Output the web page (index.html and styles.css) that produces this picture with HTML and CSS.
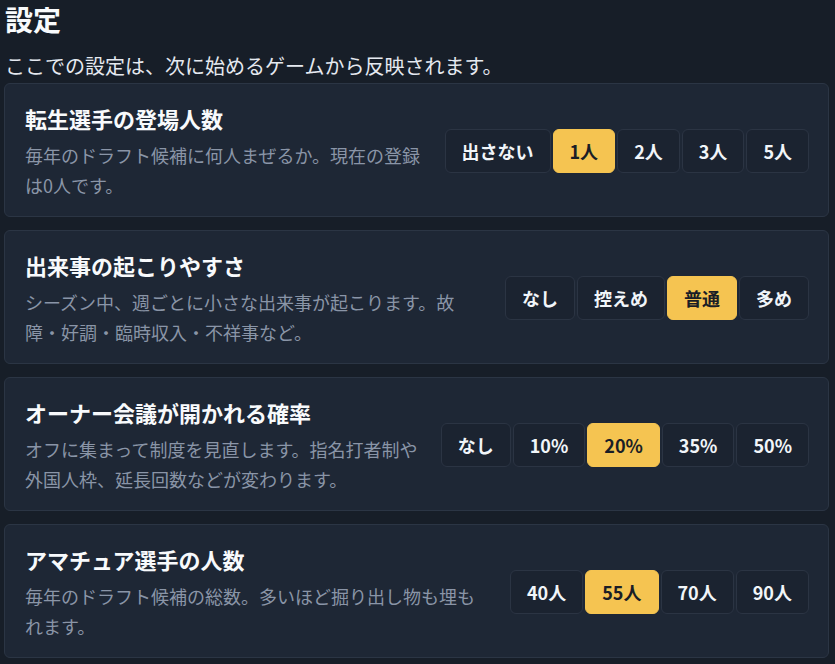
FILE: index.html
```html
<!DOCTYPE html>
<html lang="ja">
<head>
<meta charset="utf-8">
<title>設定</title>
<link rel="stylesheet" href="styles.css">
</head>
<body>
<main class="page">
  <h1 class="page-title">設定</h1>
  <p class="page-sub">ここでの設定は、次に始めるゲームから反映されます。</p>

  <section class="card">
    <div class="card-text">
      <h2 class="card-title">転生選手の登場人数</h2>
      <p class="card-desc">毎年のドラフト候補に何人まぜるか。現在の登録は0人です。</p>
    </div>
    <div class="seg">
      <button class="seg-btn">出さない</button>
      <button class="seg-btn is-active">1人</button>
      <button class="seg-btn">2人</button>
      <button class="seg-btn">3人</button>
      <button class="seg-btn">5人</button>
    </div>
  </section>

  <section class="card">
    <div class="card-text">
      <h2 class="card-title">出来事の起こりやすさ</h2>
      <p class="card-desc">シーズン中、週ごとに小さな出来事が起こります。故障・好調・臨時収入・不祥事など。</p>
    </div>
    <div class="seg">
      <button class="seg-btn">なし</button>
      <button class="seg-btn">控えめ</button>
      <button class="seg-btn is-active">普通</button>
      <button class="seg-btn">多め</button>
    </div>
  </section>

  <section class="card">
    <div class="card-text">
      <h2 class="card-title">オーナー会議が開かれる確率</h2>
      <p class="card-desc">オフに集まって制度を見直します。指名打者制や外国人枠、延長回数などが変わります。</p>
    </div>
    <div class="seg">
      <button class="seg-btn">なし</button>
      <button class="seg-btn">10%</button>
      <button class="seg-btn is-active">20%</button>
      <button class="seg-btn">35%</button>
      <button class="seg-btn">50%</button>
    </div>
  </section>

  <section class="card">
    <div class="card-text">
      <h2 class="card-title">アマチュア選手の人数</h2>
      <p class="card-desc">毎年のドラフト候補の総数。多いほど掘り出し物も埋もれます。</p>
    </div>
    <div class="seg">
      <button class="seg-btn">40人</button>
      <button class="seg-btn is-active">55人</button>
      <button class="seg-btn">70人</button>
      <button class="seg-btn">90人</button>
    </div>
  </section>
</main>
</body>
</html>
```

FILE: styles.css
```css
html, body {
  margin: 0;
  padding: 0;
  background: #171e28;
}

body {
  font-family: "Noto Sans CJK JP", "Noto Sans", sans-serif;
  color: #f1f5f9;
}

.page {
  width: 825px;
  padding: 2px 0 0 4px;
  display: flex;
  flex-direction: column;
}

.page-title {
  margin: 0 0 0 1px;
  font-size: 28px;
  line-height: 34px;
  font-weight: 700;
  color: #f8fafc;
}

.page-sub {
  margin: 15px 0 2px 1px;
  font-size: 20px;
  line-height: 30px;
  color: #e5e9f0;
}

.card {
  display: flex;
  align-items: center;
  gap: 20px;
  margin-bottom: 13px;
  padding: 18px 19px 16px 20px;
  background: #1e2735;
  border: 1px solid #2b3544;
  border-radius: 6px;
}

.card-text {
  flex: 1;
  min-width: 0;
}

.card-title {
  margin: 0 0 6px;
  font-size: 22px;
  line-height: 32px;
  font-weight: 700;
  color: #f8fafc;
}

.card-desc {
  margin: 0;
  font-size: 18px;
  line-height: 30px;
  color: #8a95a7;
}

.seg {
  flex-shrink: 0;
  display: flex;
  gap: 2px;
}

.seg-btn {
  height: 44px;
  padding: 0 16px;
  display: flex;
  align-items: center;
  justify-content: center;
  font-family: inherit;
  font-size: 18px;
  font-weight: 700;
  color: #f1f5f9;
  background: #1b2330;
  border: 1px solid #2b3443;
  border-radius: 6px;
}

.seg-btn.is-active {
  background: #f5c451;
  border-color: #f5c451;
  color: #1a1e26;
}
```
